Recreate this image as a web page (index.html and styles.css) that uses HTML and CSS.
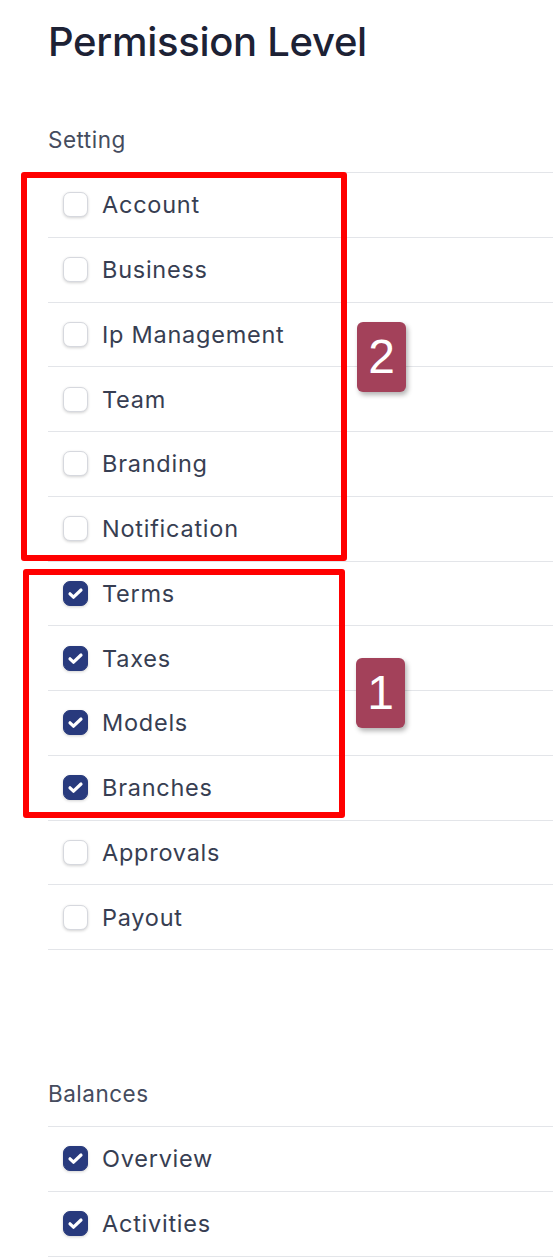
FILE: index.html
```html
<!DOCTYPE html>
<html lang="en">
<head>
    <meta charset="UTF-8">
    <meta name="viewport" content="width=device-width, initial-scale=1.0">
    <title>Permission Level</title>
    <link rel="stylesheet" href="styles.css">
</head>
<body>
    <div class="page">
        <h1>Permission Level</h1>

        <section class="group">
            <h2>Setting</h2>
            <ul class="perm-list">
                <li><span class="box"></span>Account</li>
                <li><span class="box"></span>Business</li>
                <li><span class="box"></span>Ip Management</li>
                <li><span class="box"></span>Team</li>
                <li><span class="box"></span>Branding</li>
                <li><span class="box"></span>Notification</li>
                <li><span class="box checked"><svg viewBox="0 0 25 25"><path d="M7 12.8l3.5 3.4L18 9"/></svg></span>Terms</li>
                <li><span class="box checked"><svg viewBox="0 0 25 25"><path d="M7 12.8l3.5 3.4L18 9"/></svg></span>Taxes</li>
                <li><span class="box checked"><svg viewBox="0 0 25 25"><path d="M7 12.8l3.5 3.4L18 9"/></svg></span>Models</li>
                <li><span class="box checked"><svg viewBox="0 0 25 25"><path d="M7 12.8l3.5 3.4L18 9"/></svg></span>Branches</li>
                <li><span class="box"></span>Approvals</li>
                <li><span class="box"></span>Payout</li>
            </ul>
        </section>

        <section class="group group-balances">
            <h2>Balances</h2>
            <ul class="perm-list">
                <li><span class="box checked"><svg viewBox="0 0 25 25"><path d="M7 12.8l3.5 3.4L18 9"/></svg></span>Overview</li>
                <li><span class="box checked"><svg viewBox="0 0 25 25"><path d="M7 12.8l3.5 3.4L18 9"/></svg></span>Activities</li>
            </ul>
        </section>

        <!-- annotation overlays -->
        <div class="mark mark-two"></div>
        <div class="mark mark-one"></div>
        <div class="tag tag-two">2</div>
        <div class="tag tag-one">1</div>
    </div>
</body>
</html>
```

FILE: styles.css
```css
body {
    margin: 0;
    background-color: #fff;
    font-family: Inter, "Noto Sans", sans-serif;
    color: #3b4256;
}
.page {
    position: relative;
    padding-left: 48px;
    overflow: hidden;
}
h1 {
    margin: 18px 0 0;
    font-size: 40px;
    line-height: 48px;
    font-weight: 500;
    color: #1d2235;
    letter-spacing: -0.3px;
}
.group {
    margin-top: 60px;
}
.group h2 {
    margin: 0 0 18px;
    font-size: 22.5px;
    line-height: 28px;
    font-weight: 400;
    letter-spacing: 0.5px;
    color: #454c5e;
}
.group-balances {
    margin-top: 130px;
}
.perm-list {
    list-style: none;
    margin: 0;
    padding: 0;
    border-top: 1px solid #e3e5e9;
}
.perm-list li {
    box-sizing: border-box;
    height: 64.75px;
    display: flex;
    align-items: center;
    gap: 14px;
    padding-left: 15px;
    border-bottom: 1px solid #e3e5e9;
    font-size: 23.5px;
    letter-spacing: 0.75px;
    color: #373e52;
}
.box {
    box-sizing: border-box;
    flex: none;
    width: 25px;
    height: 25px;
    border-radius: 7px;
    border: 1px solid #d6d8de;
    background-color: #fff;
    box-shadow: 0 1px 3px rgba(0, 0, 0, 0.18);
}
.box.checked {
    background-color: #283a7d;
    border-color: #283a7d;
}
.box svg {
    display: block;
    width: 25px;
    height: 25px;
    margin: -1px;
    fill: none;
    stroke: #fff;
    stroke-width: 3.2;
    stroke-linecap: round;
    stroke-linejoin: round;
}
.mark {
    position: absolute;
    box-sizing: border-box;
    border: 6px solid #ff0000;
    border-radius: 3px;
}
.mark-two {
    left: 21px;
    top: 172px;
    width: 326px;
    height: 389px;
}
.mark-one {
    left: 23px;
    top: 569px;
    width: 322px;
    height: 249px;
}
.tag {
    position: absolute;
    width: 49px;
    height: 70px;
    border-radius: 6px;
    background-color: #a3415a;
    box-shadow: 2px 3px 5px rgba(0, 0, 0, 0.3);
    color: #fff;
    font-family: "Liberation Sans", Arial, sans-serif;
    font-size: 48px;
    line-height: 70px;
    text-align: center;
}
.tag-two {
    left: 357px;
    top: 322px;
}
.tag-one {
    left: 356px;
    top: 658px;
}
```
